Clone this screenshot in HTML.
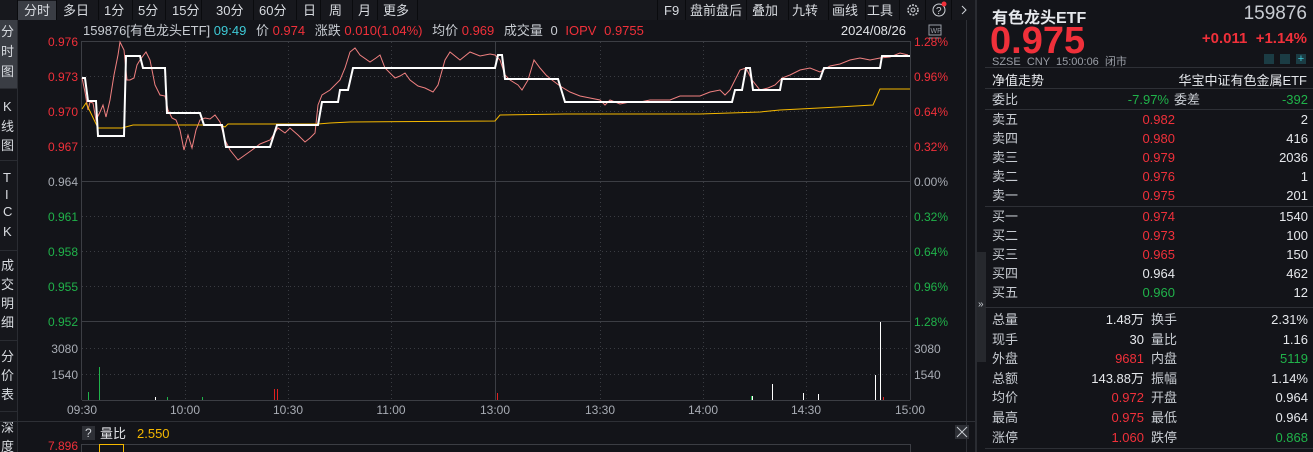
<!DOCTYPE html>
<html><head><meta charset="utf-8"><style>
*{margin:0;padding:0;box-sizing:border-box}
body{width:1313px;height:452px;background:#131419;overflow:hidden;font-family:"Liberation Sans","Noto Sans CJK SC",sans-serif;color:#c8ccd2;position:relative}
.abs{position:absolute;white-space:nowrap}
.r{color:#f0303a}.g{color:#20b24a}.w{color:#e6e8ec}
.rp div.row{position:absolute;left:992px;width:316px;height:19px;font-size:13px;line-height:19px}
.row span{position:absolute}
</style></head><body>
<svg class="abs" style="left:0;top:0" width="975" height="452" font-family="Liberation Sans, Noto Sans CJK SC, sans-serif" font-size="12">
<rect x="0" y="0" width="975" height="20" fill="#17181d"/>
<rect x="18" y="1" width="38" height="19" fill="#3a3d44"/>
<g fill="#d8dbe0" font-size="13">
<text x="24" y="15">分时</text><text x="63" y="15">多日</text><text x="104" y="15">1分</text><text x="138" y="15">5分</text><text x="172" y="15">15分</text><text x="216" y="15">30分</text><text x="259" y="15">60分</text><text x="303" y="15">日</text><text x="329" y="15">周</text><text x="358" y="15">月</text><text x="383" y="15">更多</text>
<text x="664" y="15">F9</text><text x="690" y="15">盘前盘后</text><text x="752" y="15">叠加</text><text x="792" y="15">九转</text><text x="832" y="15">画线</text><text x="867" y="15">工具</text>
</g>
<g stroke="#0a0b0e" stroke-width="1"><line x1="17.5" y1="0" x2="17.5" y2="20"/><line x1="56.5" y1="0" x2="56.5" y2="20"/><line x1="98.5" y1="0" x2="98.5" y2="20"/><line x1="132.5" y1="0" x2="132.5" y2="20"/><line x1="165.5" y1="0" x2="165.5" y2="20"/><line x1="201.5" y1="0" x2="201.5" y2="20"/><line x1="253.5" y1="0" x2="253.5" y2="20"/><line x1="296.5" y1="0" x2="296.5" y2="20"/><line x1="320.5" y1="0" x2="320.5" y2="20"/><line x1="352.5" y1="0" x2="352.5" y2="20"/><line x1="377.5" y1="0" x2="377.5" y2="20"/><line x1="417.5" y1="0" x2="417.5" y2="20"/><line x1="657.5" y1="0" x2="657.5" y2="20"/><line x1="685.5" y1="0" x2="685.5" y2="20"/><line x1="746.5" y1="0" x2="746.5" y2="20"/><line x1="788.5" y1="0" x2="788.5" y2="20"/><line x1="828.5" y1="0" x2="828.5" y2="20"/><line x1="865.5" y1="0" x2="865.5" y2="20"/><line x1="899.5" y1="0" x2="899.5" y2="20"/><line x1="925.5" y1="0" x2="925.5" y2="20"/><line x1="951.5" y1="0" x2="951.5" y2="20"/></g>
<circle cx="913" cy="10" r="5" fill="none" stroke="#d0d3d8" stroke-width="1.5" stroke-dasharray="2 1.2"/><circle cx="913" cy="10" r="2" fill="none" stroke="#d0d3d8"/>
<circle cx="939" cy="10" r="6" fill="none" stroke="#d0d3d8"/><text x="936" y="14" fill="#d0d3d8" font-size="10">?</text><circle cx="944" cy="4" r="2.5" fill="#f0303a"/>
<path d="M962 6 L966 10 L962 14" fill="none" stroke="#d0d3d8"/>
<rect x="0" y="20" width="17" height="432" fill="#16171c"/>
<rect x="0" y="20" width="17" height="68" fill="#3a3d44"/>
<line x1="17.5" y1="20" x2="17.5" y2="452" stroke="#2a2c32"/>
<g fill="#d8dbe0" font-size="13"><text x="1" y="36">分</text><text x="1" y="56">时</text><text x="1" y="76">图</text>
<text x="3" y="111">K</text><text x="1" y="131">线</text><text x="1" y="150">图</text>
<text x="3" y="182">T</text><text x="5" y="199">I</text><text x="3" y="216">C</text><text x="3" y="236">K</text>
<text x="1" y="270">成</text><text x="1" y="289">交</text><text x="1" y="308">明</text><text x="1" y="327">细</text>
<text x="1" y="361">分</text><text x="1" y="380">价</text><text x="1" y="399">表</text>
<text x="1" y="432">深</text><text x="1" y="451">度</text></g>
<g stroke="#2a2c32"><line x1="0" y1="88.5" x2="17" y2="88.5"/><line x1="0" y1="160.5" x2="17" y2="160.5"/><line x1="0" y1="250.5" x2="17" y2="250.5"/><line x1="0" y1="340.5" x2="17" y2="340.5"/><line x1="0" y1="411.5" x2="17" y2="411.5"/></g>
<text x="83" y="35" fill="#c8ccd2" font-size="13">159876[有色龙头ETF] <tspan fill="#3ec9d6">09:49</tspan>  <tspan dx="6">价</tspan> <tspan fill="#f0303a">0.974</tspan>  <tspan dx="6">涨跌</tspan> <tspan fill="#f0303a">0.010(1.04%)</tspan>  <tspan dx="6">均价</tspan> <tspan fill="#f0303a">0.969</tspan>  <tspan dx="6">成交量</tspan>  <tspan dx="4">0</tspan>  <tspan dx="4" fill="#f0303a">IOPV</tspan>  <tspan dx="4" fill="#f0303a">0.9755</tspan></text>
<text x="906" y="35" fill="#e0e2e6" text-anchor="end" font-size="13">2024/08/26</text>
<rect x="929" y="25" width="12" height="10" fill="none" stroke="#9a9ea6"/><text x="930.5" y="33" fill="#9a9ea6" font-size="7">WP</text><line x1="929" y1="38" x2="941" y2="38" stroke="#9a9ea6"/>
<g stroke="#3a3c42" stroke-dasharray="1 3"><line x1="82" y1="76.5" x2="910" y2="76.5"/><line x1="82" y1="111.5" x2="910" y2="111.5"/><line x1="82" y1="146.5" x2="910" y2="146.5"/><line x1="82" y1="216.5" x2="910" y2="216.5"/><line x1="82" y1="251.5" x2="910" y2="251.5"/><line x1="82" y1="286.5" x2="910" y2="286.5"/><line x1="82" y1="348.5" x2="910" y2="348.5"/><line x1="82" y1="374.5" x2="910" y2="374.5"/>
<line x1="185.5" y1="42" x2="185.5" y2="400"/><line x1="288.5" y1="42" x2="288.5" y2="400"/><line x1="391.5" y1="42" x2="391.5" y2="400"/><line x1="600.5" y1="42" x2="600.5" y2="400"/><line x1="703.5" y1="42" x2="703.5" y2="400"/><line x1="806.5" y1="42" x2="806.5" y2="400"/></g>
<g stroke="#3c3e44"><line x1="82" y1="41.5" x2="910" y2="41.5"/><line x1="82" y1="181.5" x2="910" y2="181.5"/><line x1="82" y1="321.5" x2="910" y2="321.5"/><line x1="82" y1="400.5" x2="910" y2="400.5"/><line x1="81.5" y1="41" x2="81.5" y2="400"/><line x1="910.5" y1="41" x2="910.5" y2="400"/><line x1="495.5" y1="41" x2="495.5" y2="400"/></g>
<line x1="0" y1="421.5" x2="975" y2="421.5" stroke="#2e3036"/>
<line x1="966.5" y1="20" x2="966.5" y2="452" stroke="#2e3036"/>
<g text-anchor="end"><text x="78" y="46" fill="#f0303a">0.976</text><text x="78" y="81" fill="#f0303a">0.973</text><text x="78" y="116" fill="#f0303a">0.970</text><text x="78" y="151" fill="#f0303a">0.967</text><text x="78" y="186" fill="#a8acb4">0.964</text><text x="78" y="221" fill="#20b24a">0.961</text><text x="78" y="256" fill="#20b24a">0.958</text><text x="78" y="291" fill="#20b24a">0.955</text><text x="78" y="326" fill="#20b24a">0.952</text><text x="78" y="353" fill="#a8acb4">3080</text><text x="78" y="379" fill="#a8acb4">1540</text></g>
<g><text x="914" y="46" fill="#f0303a">1.28%</text><text x="914" y="81" fill="#f0303a">0.96%</text><text x="914" y="116" fill="#f0303a">0.64%</text><text x="914" y="151" fill="#f0303a">0.32%</text><text x="914" y="186" fill="#a8acb4">0.00%</text><text x="914" y="221" fill="#20b24a">0.32%</text><text x="914" y="256" fill="#20b24a">0.64%</text><text x="914" y="291" fill="#20b24a">0.96%</text><text x="914" y="326" fill="#20b24a">1.28%</text><text x="914" y="353" fill="#a8acb4">3080</text><text x="914" y="379" fill="#a8acb4">1540</text></g>
<g fill="#a8acb4" text-anchor="middle"><text x="82" y="414">09:30</text><text x="185" y="414">10:00</text><text x="288" y="414">10:30</text><text x="391" y="414">11:00</text><text x="495" y="414">13:00</text><text x="600" y="414">13:30</text><text x="703" y="414">14:00</text><text x="806" y="414">14:30</text><text x="910" y="414">15:00</text></g>
<polyline fill="none" stroke="#f08080" stroke-width="1" points="82,78 85,92 88,110 90,102 93,103 96,120 100,112 103,105 106,117 110,100 114,75 118,55 120,42 124,50 127,80 130,80 134,78 137,65 140,60 146,52 150,60 155,85 160,95 165,96 168,110 172,118 176,120 180,130 184,150 188,135 192,148 196,130 200,120 205,118 210,119 215,115 220,122 225,140 230,150 238,160 245,155 252,150 260,144 270,140 278,128 285,133 290,128 298,135 305,142 310,138 315,133 318,105 322,95 330,90 340,80 345,68 350,52 355,48 360,55 370,62 376,58 380,55 385,68 395,78 400,76 405,73 410,80 418,86 425,88 433,92 438,85 445,60 450,52 460,60 470,52 480,56 490,54 495,55 500,60 505,75 510,80 518,85 522,90 528,80 534,60 540,68 546,75 552,80 560,86 570,92 580,96 590,98 600,100 605,105 610,100 620,104 630,102 640,102 650,100 660,100 670,100 680,96 700,96 710,92 720,90 725,95 730,90 740,70 746,68 752,80 760,90 768,88 775,85 782,78 790,75 800,70 810,68 820,72 830,66 840,64 850,60 860,58 870,60 880,58 890,57 900,53 908,55"/>
<polyline fill="none" stroke="#f5b800" stroke-width="1" points="82,109 86,103 98,128 122,128 133,125 220,125 225,127 228,124 318,124 330,123 350,122 495,121 500,115 565,114 700,114 760,112 780,110 800,109 838,107 873,105 880,89 910,89"/>
<polyline fill="none" stroke="#ffffff" stroke-width="2" points="82,78 85,78 88,101 96,101 98,136 124,136 126,56 140,56 143,68 165,68 167,113 200,113 204,125 222,125 226,147 270,147 277,125 318,125 322,102 338,102 340,90 348,90 353,68 495,68 498,55 502,55 505,79 558,79 565,102 732,102 735,90 742,90 746,68 750,68 753,90 780,90 782,79 820,79 824,68 880,68 882,56 910,56"/>
<g stroke-width="1"><line x1="88.5" y1="392" x2="88.5" y2="400" stroke="#20b24a"/><line x1="99.5" y1="367" x2="99.5" y2="400" stroke="#20b24a"/><line x1="274.5" y1="389" x2="274.5" y2="400" stroke="#e02020"/><line x1="277.5" y1="389" x2="277.5" y2="400" stroke="#e02020"/><line x1="497.5" y1="393" x2="497.5" y2="400" stroke="#e02020"/><line x1="155.5" y1="397" x2="155.5" y2="400" stroke="#fff"/><line x1="167.5" y1="397" x2="167.5" y2="400" stroke="#20b24a"/><line x1="202.5" y1="397" x2="202.5" y2="400" stroke="#20b24a"/><line x1="772.5" y1="384" x2="772.5" y2="400" stroke="#fff"/><line x1="818.5" y1="394" x2="818.5" y2="400" stroke="#fff"/><line x1="803.5" y1="393" x2="803.5" y2="400" stroke="#fff"/><line x1="752.5" y1="396" x2="752.5" y2="400" stroke="#fff"/><line x1="751.5" y1="396" x2="751.5" y2="400" stroke="#20b24a"/><line x1="875.5" y1="375" x2="875.5" y2="400" stroke="#fff"/><line x1="880.5" y1="322" x2="880.5" y2="400" stroke="#fff"/><line x1="883.5" y1="397" x2="883.5" y2="400" stroke="#e02020"/></g>
<rect x="82" y="426" width="13" height="14" fill="#2e3036"/><text x="85" y="437" fill="#d0d3d8">?</text>
<text x="100" y="438" fill="#e0e2e6" font-size="13">量比</text><text x="137" y="438" fill="#f5b800" font-size="13">2.550</text>
<text x="78" y="450" fill="#f0303a" text-anchor="end">7.896</text>
<line x1="82" y1="444.5" x2="910" y2="444.5" stroke="#3c3e44"/><line x1="81.5" y1="444" x2="81.5" y2="452" stroke="#3c3e44"/><line x1="910.5" y1="444" x2="910.5" y2="452" stroke="#3c3e44"/>
<rect x="99.5" y="444.5" width="24" height="10" fill="none" stroke="#f5b800"/>
<rect x="955" y="425" width="14" height="14" fill="#2e3036"/><path d="M957 427 L967 437 M967 427 L957 437" stroke="#c8ccd2"/>
</svg>
<div class="abs" style="left:975px;top:0;width:2px;height:452px;background:#2a2c32"></div>
<div class="abs" style="left:977px;top:252px;width:9px;height:110px;background:#26282d"></div>
<div class="abs" style="left:978px;top:299px;font-size:10px;color:#c8ccd2">»</div>
<div class="rp">
<div class="abs w" style="left:992px;top:4px;font-size:16px;font-weight:bold">有色龙头ETF</div>
<div class="abs" style="right:6px;top:3px;font-size:19px;color:#c8ccd2">159876</div>
<div class="abs r" style="left:990px;top:20px;font-size:38px;font-weight:bold;line-height:42px">0.975</div>
<div class="abs r" style="right:6px;top:30px;font-size:15px;font-weight:bold">+0.011 &nbsp;+1.14%</div>
<div class="abs" style="left:992px;top:53px;font-size:11px;color:#9a9ea6">SZSE &nbsp;CNY &nbsp;15:00:06 &nbsp;闭市</div>
<div class="abs" style="left:1264px;top:54px;width:10px;height:10px;background:#1b3c44"></div>
<div class="abs" style="left:1280px;top:54px;width:10px;height:10px;background:#1b3c44"></div>
<div class="abs" style="left:1296px;top:54px;width:10px;height:10px;background:#1b3c44;color:#3ec9d6;font-size:11px;line-height:10px;text-align:center">+</div>
<div class="abs" style="left:985px;top:67px;width:328px;height:1px;background:#2e3036"></div>
<div class="abs w" style="left:992px;top:70px;font-size:13px">净值走势</div>
<div class="abs w" style="right:6px;top:70px;font-size:13px">华宝中证有色金属ETF</div>
<div class="abs" style="left:985px;top:88px;width:328px;height:1px;background:#2e3036"></div>
<div class="row" style="top:90px"><span style="left:0">委比</span><span class="g" style="right:139px">-7.97%</span><span style="left:182px">委差</span><span class="g" style="right:0">-392</span></div>
<div class="abs" style="left:985px;top:109px;width:328px;height:1px;background:#2e3036"></div>
<div class="row" style="top:110px"><span>卖五</span><span class="r" style="right:133px">0.982</span><span class="w" style="right:0">2</span></div>
<div class="row" style="top:129px"><span>卖四</span><span class="r" style="right:133px">0.980</span><span class="w" style="right:0">416</span></div>
<div class="row" style="top:148px"><span>卖三</span><span class="r" style="right:133px">0.979</span><span class="w" style="right:0">2036</span></div>
<div class="row" style="top:167px"><span>卖二</span><span class="r" style="right:133px">0.976</span><span class="w" style="right:0">1</span></div>
<div class="row" style="top:186px"><span>卖一</span><span class="r" style="right:133px">0.975</span><span class="w" style="right:0">201</span></div>
<div class="abs" style="left:985px;top:206px;width:328px;height:1px;background:#2e3036"></div>
<div class="row" style="top:207px"><span>买一</span><span class="r" style="right:133px">0.974</span><span class="w" style="right:0">1540</span></div>
<div class="row" style="top:226px"><span>买二</span><span class="r" style="right:133px">0.973</span><span class="w" style="right:0">100</span></div>
<div class="row" style="top:245px"><span>买三</span><span class="r" style="right:133px">0.965</span><span class="w" style="right:0">150</span></div>
<div class="row" style="top:264px"><span>买四</span><span class="w" style="right:133px">0.964</span><span class="w" style="right:0">462</span></div>
<div class="row" style="top:283px"><span>买五</span><span class="g" style="right:133px">0.960</span><span class="w" style="right:0">12</span></div>
<div class="abs" style="left:985px;top:307px;width:328px;height:1px;background:#2e3036"></div>
<div class="row" style="top:310px"><span>总量</span><span class="w" style="right:164px">1.48万</span><span style="left:159px">换手</span><span class="w" style="right:0">2.31%</span></div>
<div class="row" style="top:330px"><span>现手</span><span class="w" style="right:164px">30</span><span style="left:159px">量比</span><span class="w" style="right:0">1.16</span></div>
<div class="row" style="top:349px"><span>外盘</span><span class="r" style="right:164px">9681</span><span style="left:159px">内盘</span><span class="g" style="right:0">5119</span></div>
<div class="row" style="top:369px"><span>总额</span><span class="w" style="right:164px">143.88万</span><span style="left:159px">振幅</span><span class="w" style="right:0">1.14%</span></div>
<div class="row" style="top:388px"><span>均价</span><span class="r" style="right:164px">0.972</span><span style="left:159px">开盘</span><span class="w" style="right:0">0.964</span></div>
<div class="row" style="top:408px"><span>最高</span><span class="r" style="right:164px">0.975</span><span style="left:159px">最低</span><span class="w" style="right:0">0.964</span></div>
<div class="row" style="top:428px"><span>涨停</span><span class="r" style="right:164px">1.060</span><span style="left:159px">跌停</span><span class="g" style="right:0">0.868</span></div>
<div class="abs" style="left:985px;top:448px;width:328px;height:1px;background:#2e3036"></div>
</div>
</body></html>
